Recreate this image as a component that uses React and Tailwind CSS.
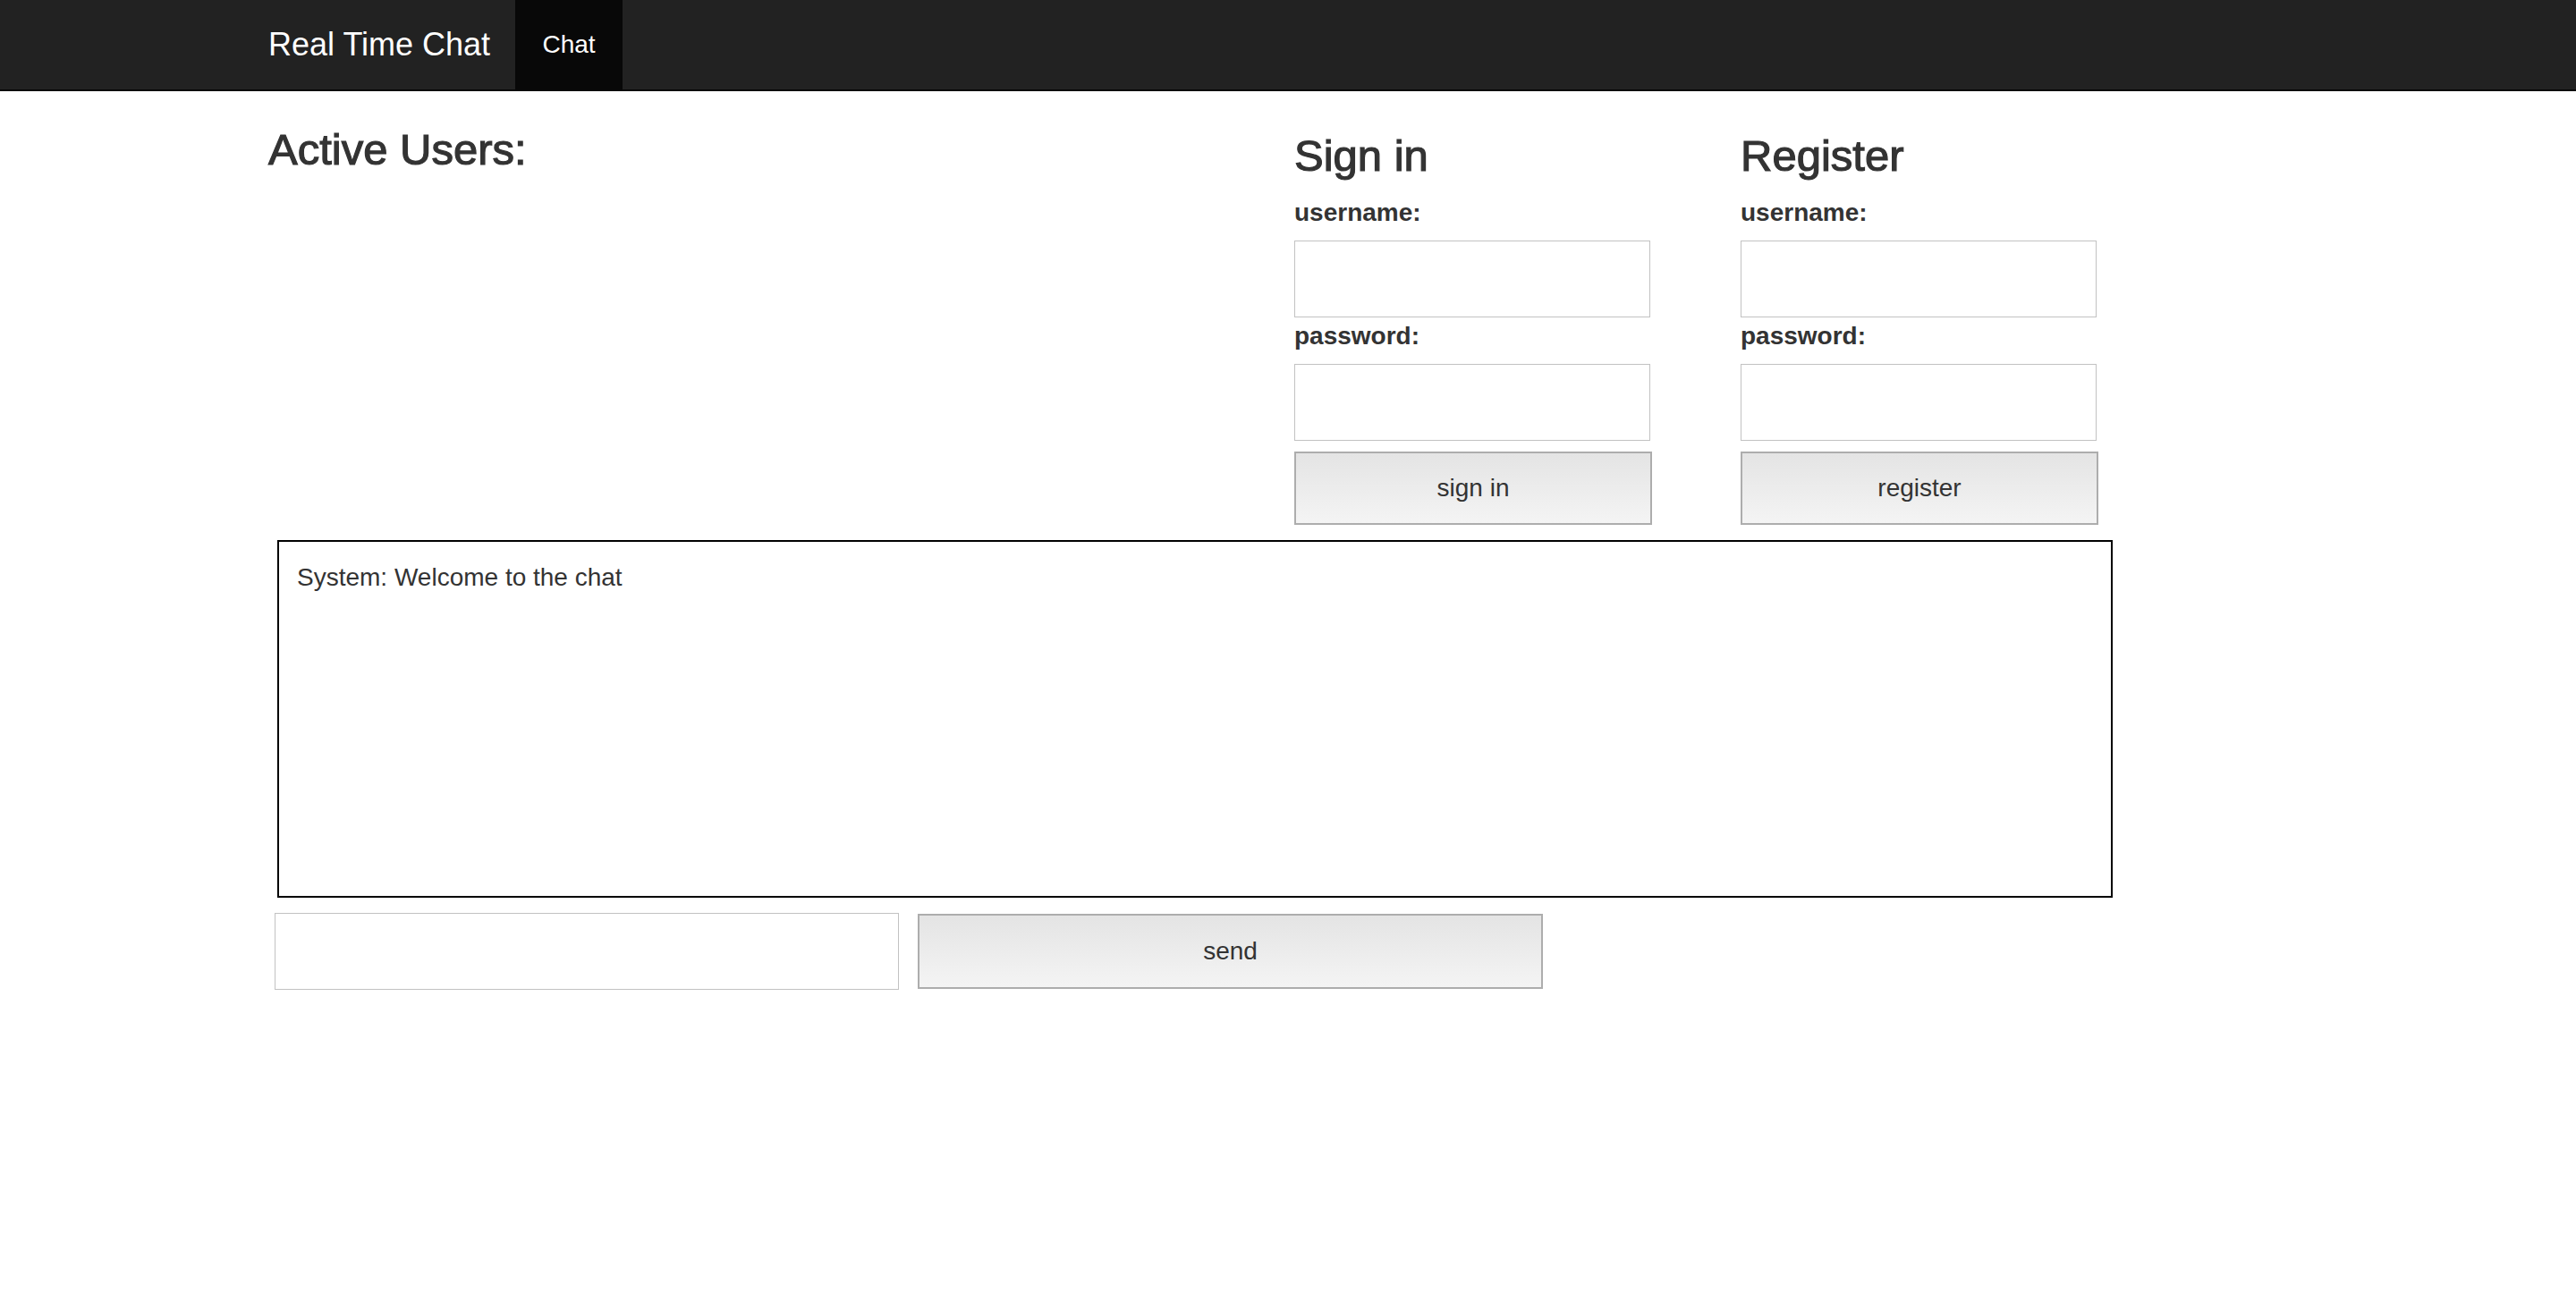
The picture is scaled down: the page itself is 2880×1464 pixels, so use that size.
import { useState } from 'react';

const font = { fontFamily: '"Liberation Sans", Arial, sans-serif' };

const Field = ({ label, type = 'text', first }) => (
  <>
    <label className={`${first ? 'mt-[17px]' : 'mt-[1px]'} block h-[40px] text-[28px] leading-[40px] font-bold text-[#333]`}>{label}</label>
    <input
      type={type}
      className="mt-[11px] block h-[86px] w-[398px] border border-[#c2c2c2] bg-white px-4 text-[28px] outline-none"
    />
  </>
);

const AuthForm = ({ title, action, className }) => (
  <div className={className}>
    <h3 className="h-[54px] text-[49px] leading-[54px] text-[#333] [-webkit-text-stroke:1.2px_#333]">{title}</h3>
    <Field label="username:" first />
    <Field label="password:" type="password" />
    <button className="mt-[12px] block h-[82px] w-[400px] border-2 border-[#adadad] bg-gradient-to-b from-[#e4e4e4] to-[#f4f4f4] text-[28px] text-[#333]">
      {action}
    </button>
  </div>
);

export default function App() {
  const [messages] = useState([{ from: 'System', text: 'Welcome to the chat' }]);
  const [draft, setDraft] = useState('');

  return (
    <div className="min-h-screen bg-white" style={font}>
      {/* Navbar */}
      <nav className="h-[102px] border-b-2 border-[#080808] bg-[#222]">
        <div className="mx-auto flex w-[2340px]">
          <a className="block h-[100px] w-[306px] pl-[30px] pt-[30px] text-[36px] leading-[40px] text-white">Real Time Chat</a>
          <a className="block h-[100px] w-[120px] bg-[#080808] pt-[30px] text-center text-[28px] leading-[40px] text-white">Chat</a>
        </div>
      </nav>

      <div className="mx-auto w-[2340px] px-[30px]">
        <div className="flex items-start">
          <div className="w-[1147px] pt-[38px]">
            <h2 className="h-[54px] text-[49px] leading-[54px] text-[#333] [-webkit-text-stroke:1.2px_#333]">Active Users:</h2>
          </div>
          <AuthForm title="Sign in" action="sign in" className="w-[499px] pt-[45px]" />
          <AuthForm title="Register" action="register" className="w-[399px] pt-[45px]" />
        </div>

        {/* Chat log */}
        <div className="ml-[10px] mt-[17px] h-[400px] w-[2052px] border-2 border-black p-5 text-[28px] leading-[40px] text-[#333]">
          {messages.map((m, i) => (
            <div key={i}>{m.from}: {m.text}</div>
          ))}
        </div>

        <div className="mt-[17px] flex items-start">
          <input
            value={draft}
            onChange={e => setDraft(e.target.value)}
            className="ml-[7px] h-[86px] w-[698px] border border-[#c2c2c2] bg-white px-4 text-[28px] outline-none"
          />
          <button className="ml-[21px] mt-[1px] h-[84px] w-[699px] border-2 border-[#adadad] bg-gradient-to-b from-[#e4e4e4] to-[#f4f4f4] text-[28px] text-[#333]">
            send
          </button>
        </div>
      </div>
    </div>
  );
}
